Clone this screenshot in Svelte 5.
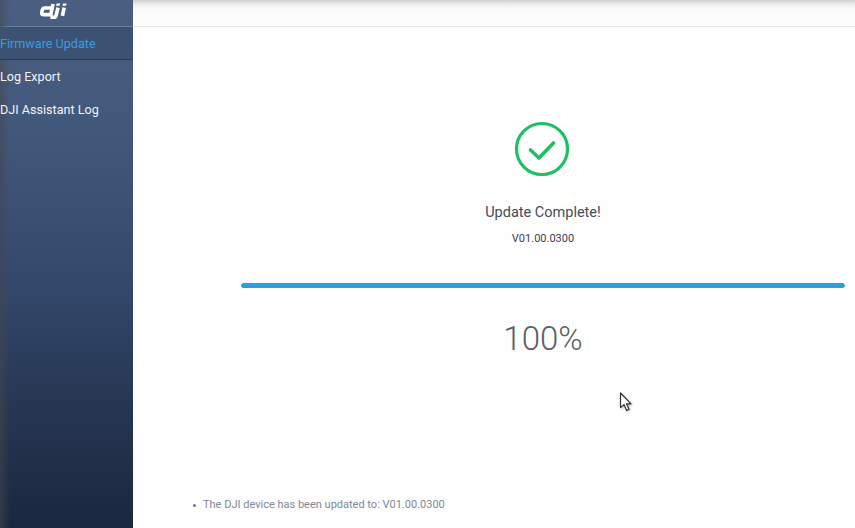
<script lang="ts">
  const menu = [
    { label: 'Firmware Update', active: true },
    { label: 'Log Export', active: false },
    { label: 'DJI Assistant Log', active: false },
  ];
  const version = 'V01.00.0300';
  const progress = 100;
</script>

<div class="app">
  <aside class="side">
    <div class="logo">
      <svg width="28" height="16" viewBox="0 0 28 16" aria-label="DJI">
        <g fill="none" stroke="#fff" stroke-width="3.6">
          <path d="M13 1 L10.8 11.6 H3.4 Q1.2 11.6 1.7 9.6 L2.3 7 Q2.8 5 4.9 5 H11.6" />
          <path d="M18 4.6 L16 12.8 Q15.6 14.4 13.6 14.4 H10.4" />
          <path d="M24.2 4.6 L22.4 12.8" />
        </g>
        <path d="M16.6 .4 h3.6 l-.6 2.4 h-3.6 z M23 .4 h3.6 l-.6 2.4 h-3.6 z" fill="#fff" />
      </svg>
    </div>
    <nav>
      {#each menu as m}
        <div class="item" class:active={m.active}>{m.label}</div>
      {/each}
    </nav>
    <span class="edge"></span>
  </aside>

  <main class="main">
    <header class="top"></header>
    <section class="status">
      <svg class="check" width="56" height="56" viewBox="0 0 56 56">
        <circle cx="28" cy="28" r="25.5" fill="none" stroke="#1fbf63" stroke-width="3.2" />
        <path d="M16.5 29 L25 37 L39.5 22" fill="none" stroke="#1fbf63" stroke-width="3.6" stroke-linecap="round" stroke-linejoin="round" />
      </svg>
      <h2 class="title">Update Complete!</h2>
      <p class="ver">{version}</p>
      <div class="track"><div class="fill" style="width:{progress}%"></div></div>
      <div class="pct">{progress}%</div>
    </section>
    <ul class="notes">
      <li>The DJI device has been updated to: {version}</li>
    </ul>
  </main>

  <svg class="cursor" width="14" height="20" viewBox="0 0 14 20">
    <path d="M1.5 1 V15.5 L5 12.6 L7.6 18.4 L10 17.3 L7.5 11.8 H12 Z" fill="#fff" stroke="#333" stroke-width="1.2" stroke-linejoin="round" />
  </svg>
</div>

<style>
  :global(body) { margin: 0; background: #fff; }
  .app { position: relative; display: flex; height: 528px; width: 855px; overflow: hidden; font-family: Roboto, "Liberation Sans", sans-serif; }
  .side { position: relative; width: 133px; flex-shrink: 0; background: linear-gradient(180deg, #4a5f82 0%, #42587a 25%, #33476a 55%, #25344f 80%, #1a2740 100%); }
  .edge { position: absolute; left: 0; top: 0; bottom: 0; width: 10px; background: linear-gradient(90deg, rgba(70, 70, 75, .55), rgba(70, 70, 75, 0)); }
  .logo { height: 27px; display: flex; align-items: center; justify-content: center; padding: 0 26px 4px 0; box-sizing: border-box; border-bottom: 1px solid #6c7f9b; }
  .item { position: relative; z-index: 1; height: 33px; line-height: 34px; font-size: 12.6px; color: #f1f3f6; white-space: nowrap; }
  .item.active { color: #3a9be4; background: #3b5272; border-bottom: 1px solid #2a3c58; height: 32px; line-height: 34px; }
  .main { flex: 1; display: flex; flex-direction: column; background: #fefefe; }
  .top { height: 26px; flex-shrink: 0; border-bottom: 1px solid #e8e8e8; background: linear-gradient(180deg, #d0cecd 0, #ececec 4px, #fbfbfb 10px, #fdfdfd 100%); }
  .status { display: flex; flex-direction: column; align-items: center; padding: 94px 10px 0 108px; }
  .check { flex-shrink: 0; margin-left: -3px; }
  .title { margin: 27px 0 0; font-size: 14.5px; line-height: 17px; font-weight: 400; color: #454b58; }
  .ver { margin: 11px 0 0; font-size: 11px; line-height: 14px; color: #3c4250; }
  .track { width: 100%; height: 5px; margin-top: 37px; border-radius: 3px; background: #e6e6e6; overflow: hidden; }
  .fill { height: 100%; background: #2a9fe0; border-radius: 3px; }
  .pct { margin-top: 31px; font-size: 33px; line-height: 40px; font-weight: 300; color: #5a5f68; }
  .notes { margin: auto 0 16px; padding: 0 0 0 60px; font-size: 11px; line-height: 14px; color: #7f8896; list-style: none; }
  .notes li { display: flex; align-items: center; gap: 7px; }
  .notes li::before { content: ""; width: 3px; height: 3px; border-radius: 50%; background: #6f7785; }
  .cursor { position: absolute; left: 619px; top: 392px; filter: drop-shadow(1px 1px 1px rgba(0, 0, 0, .25)); }
</style>
